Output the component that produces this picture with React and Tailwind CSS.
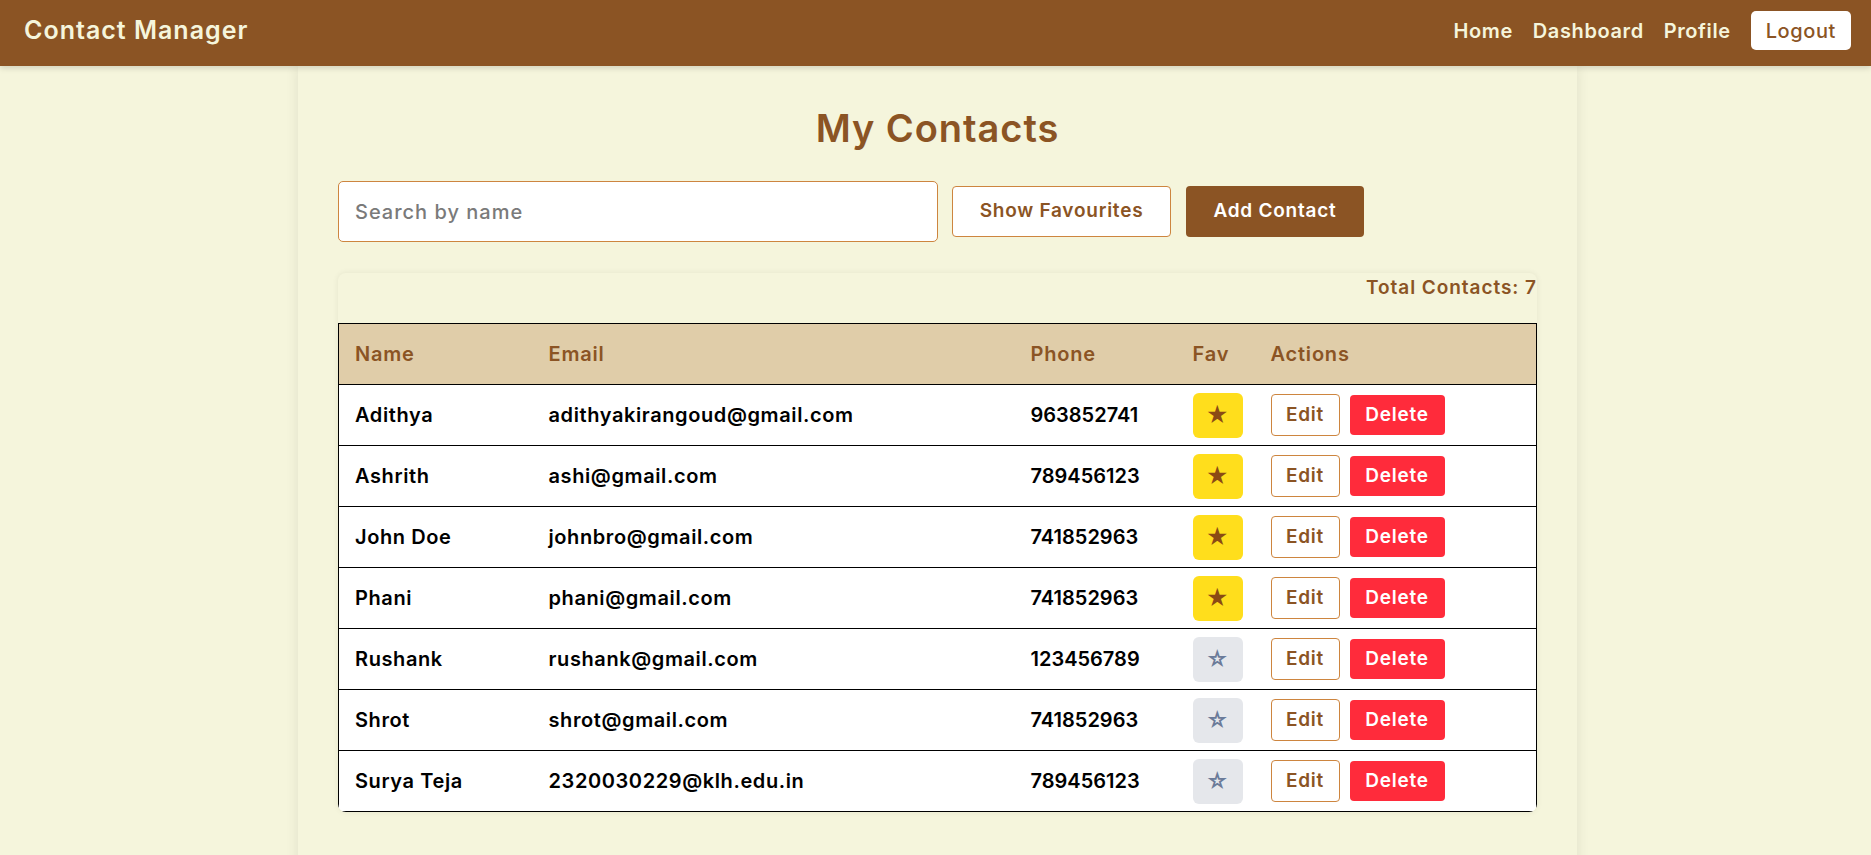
const contacts = [
  { name: "Adithya", email: "adithyakirangoud@gmail.com", phone: "963852741", fav: true },
  { name: "Ashrith", email: "ashi@gmail.com", phone: "789456123", fav: true },
  { name: "John Doe", email: "johnbro@gmail.com", phone: "741852963", fav: true },
  { name: "Phani", email: "phani@gmail.com", phone: "741852963", fav: true },
  { name: "Rushank", email: "rushank@gmail.com", phone: "123456789", fav: false },
  { name: "Shrot", email: "shrot@gmail.com", phone: "741852963", fav: false },
  { name: "Surya Teja", email: "2320030229@klh.edu.in", phone: "789456123", fav: false },
]

function Navbar() {
  return (
    <nav className="h-[66px] bg-[#8b5424] flex items-center justify-between pl-6 pr-5 pb-[5px] shadow-[0_2px_6px_rgba(0,0,0,0.15)] relative z-10">
      <div className="text-[25px] tracking-[0.04em] font-semibold text-[#f5f5dc]">Contact Manager</div>
      <div className="flex items-center gap-5 text-[20px] tracking-[0.03em] font-semibold text-[#f5f5dc]">
        <a>Home</a>
        <a>Dashboard</a>
        <a>Profile</a>
        <button className="h-[39px] px-[15px] bg-white text-[#8b5424] rounded-[5px] font-medium">Logout</button>
      </div>
    </nav>
  )
}

function FavButton({ on }) {
  return on ? (
    <button className="w-[50px] h-[45px] rounded-[6px] bg-[#ffde1c] text-[#8b4a14] text-[22px] leading-none">★</button>
  ) : (
    <button className="w-[50px] h-[45px] rounded-[6px] bg-[#e5e7eb] text-[#6b7b99] text-[22px] leading-none">☆</button>
  )
}

export default function App() {
  return (
    <div
      className="min-h-screen bg-[#f5f5dc] overflow-hidden"
      style={{ fontFamily: "Inter, 'Noto Sans', sans-serif" }}
    >
      <Navbar />
      <main className="w-[1279px] ml-[298px] bg-[#f5f5dc] shadow-[0_0_14px_rgba(0,0,0,0.09)] rounded-b-[10px] px-10 pt-10 pb-10 min-h-[820px]">
        <h2 className="text-center text-[38px] leading-[44px] tracking-[0.025em] font-semibold text-[#8b5424]">My Contacts</h2>

        <div className="mt-[31px] flex items-center">
          <input
            placeholder="Search by name"
            className="w-[600px] h-[61px] px-4 bg-white border border-[#cd853f] rounded-[5px] text-[20px] tracking-[0.05em] font-medium placeholder:text-[#7a7a7a] outline-none"
          />
          <button className="ml-[14px] w-[219px] h-[51px] bg-white border border-[#cd853f] rounded-[4px] text-[19px] tracking-[0.04em] font-semibold text-[#8b5424]">
            Show Favourites
          </button>
          <button className="ml-[15px] w-[178px] h-[51px] bg-[#8b5424] rounded-[4px] text-[19px] tracking-[0.04em] font-semibold text-white">
            Add Contact
          </button>
        </div>

        <div className="mt-[31px] rounded-[8px] shadow-[0_0_6px_rgba(0,0,0,0.07)] overflow-hidden">
          <div className="h-[50px] text-right text-[19px] leading-[30px] tracking-[0.05em] font-semibold text-[#8b5424]">
            Total Contacts: 7
          </div>
          <table className="w-full border-collapse border border-black bg-white text-[20px] tracking-[0.03em] font-semibold">
            <thead>
              <tr className="h-[61px] bg-[#e0cda9] text-[#8b5424] text-left tracking-[0.04em]">
                <th className="w-[194px] px-4 font-semibold">Name</th>
                <th className="w-[482px] px-4 font-semibold">Email</th>
                <th className="w-[162px] px-4 font-semibold">Phone</th>
                <th className="w-[78px] pl-4 pr-3 font-semibold">Fav</th>
                <th className="px-4 font-semibold">Actions</th>
              </tr>
            </thead>
            <tbody className="text-black">
              {contacts.map((c) => (
                <tr key={c.name} className="h-[61px] border-t border-black">
                  <td className="px-4">{c.name}</td>
                  <td className="px-4">{c.email}</td>
                  <td className="px-4 tracking-normal">{c.phone}</td>
                  <td className="pl-4 pr-3">
                    <FavButton on={c.fav} />
                  </td>
                  <td className="px-4">
                    <div className="flex items-center gap-[10px] text-[19px] tracking-[0.04em]">
                      <button className="w-[69px] h-[42px] bg-white border border-[#cd853f] rounded-[4px] text-[#8b5424] font-semibold">
                        Edit
                      </button>
                      <button className="w-[95px] h-[40px] bg-[#ff2b3b] rounded-[4px] text-white font-semibold">
                        Delete
                      </button>
                    </div>
                  </td>
                </tr>
              ))}
            </tbody>
          </table>
        </div>
      </main>
    </div>
  )
}
